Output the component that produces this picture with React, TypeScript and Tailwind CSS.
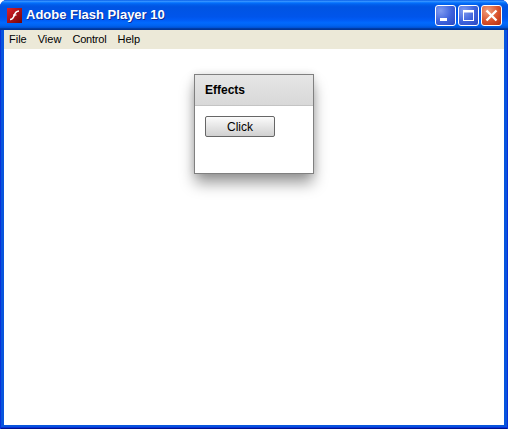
import React from 'react';

const sans = { fontFamily: '"Liberation Sans", Arial, sans-serif' };

const FlashIcon = () => (
  <svg width="15" height="15" viewBox="0 0 15 15" className="shrink-0">
    <defs>
      <linearGradient id="flashBg" x1="0" y1="0" x2="1" y2="1">
        <stop offset="0" stopColor="#e0202a" />
        <stop offset="1" stopColor="#720508" />
      </linearGradient>
    </defs>
    <rect width="15" height="15" fill="url(#flashBg)" />
    <path d="M3 11.500c2.700 0 3.700-2.200 4.400-4.500C8.100 4.800 9 3.300 12 3" fill="none" stroke="#fff" strokeWidth="1.600" />
    <path d="M6 7h3.500" stroke="#fff" strokeWidth="1.200" />
  </svg>
);

const Caption = ({ kind }: { kind: 'min' | 'max' | 'close' }) => {
  const bg =
    kind === 'close'
      ? 'bg-[radial-gradient(circle_at_30%_25%,#f0a080,#d9522c_55%,#b52c10)]'
      : 'bg-[radial-gradient(circle_at_25%_25%,#7f9bf0,#3d62dc_55%,#2a48c0)]';
  return (
    <div className={`w-[21px] h-[21px] rounded-[3px] border border-white flex items-center justify-center ${bg}`}>
      {kind === 'min' && (
        <svg width="19" height="19" viewBox="0 0 19 19">
          <rect x="4" y="12" width="7" height="3" fill="#fff" />
        </svg>
      )}
      {kind === 'max' && (
        <svg width="19" height="19" viewBox="0 0 19 19">
          <rect x="4.500" y="4.500" width="10" height="10" fill="none" stroke="#fff" />
          <rect x="4" y="4" width="11" height="2.500" fill="#fff" />
        </svg>
      )}
      {kind === 'close' && (
        <svg width="19" height="19" viewBox="0 0 19 19">
          <path d="M4.500 4.500l10 10M14.500 4.500l-10 10" stroke="#fff" strokeWidth="2.400" />
        </svg>
      )}
    </div>
  );
};

const App: React.FC = () => {
  return (
    <div className="w-[508px] h-[429px] overflow-hidden bg-white" style={sans}>
      <div className="w-full h-full flex flex-col rounded-t-[7px] bg-[#0855dd] pb-[4px] px-[4px] shadow-[inset_1px_0_0_#0831d9,inset_-1px_0_0_#0831d9,inset_0_-1px_0_#00138c,inset_0_-2px_0_#0831d9]">
        {/* Title bar */}
        <div className="h-[30px] -mx-[4px] pl-[7px] pr-[6px] flex items-center bg-[linear-gradient(180deg,#0058e6_0%,#3a93ff_4%,#288eff_6%,#127dff_8%,#036ffc_10%,#0262ee_14%,#0057e5_20%,#0054e3_24%,#0055eb_56%,#005bf5_66%,#026afe_76%,#0062ef_86%,#0052d6_92%,#0040ab_94%,#003092_100%)] rounded-t-[7px]">
          <FlashIcon />
          <span className="ml-[4px] text-white text-[13px] font-bold [text-shadow:1px_1px_0_#0a2f9a]">
            Adobe Flash Player 10
          </span>
          <div className="ml-auto flex gap-[2px]">
            <Caption kind="min" />
            <Caption kind="max" />
            <Caption kind="close" />
          </div>
        </div>
        {/* Menu bar */}
        <div className="h-[19px] bg-[#ece9d8] flex items-center gap-[11px] pl-[5px] text-[11px] text-black">
          <span>File</span>
          <span>View</span>
          <span className="tracking-[-0.2px]">Control</span>
          <span>Help</span>
        </div>
        {/* Stage */}
        <div className="flex-1 bg-white pt-[25px] pl-[190px]">
          <div className="w-[120px] h-[100px] bg-white border border-[#808080] shadow-[0_10px_14px_-1px_rgba(0,0,0,0.4),0_0_8px_rgba(0,0,0,0.12)]">
            <div className="h-[31px] pl-[10px] flex items-center bg-[linear-gradient(180deg,#e6e6e6,#d8d8d8)] border-b border-[#c4c4c4] text-[12px] font-bold text-black">
              Effects
            </div>
            <div className="flex pt-[10px] pl-[10px]">
              <button className="w-[70px] h-[21px] rounded-[2px] border border-[#666] bg-[linear-gradient(180deg,#fbfbfb,#d0d0d0)] text-[12px] text-black">
                Click
              </button>
            </div>
          </div>
        </div>
      </div>
    </div>
  );
};

export default App;
